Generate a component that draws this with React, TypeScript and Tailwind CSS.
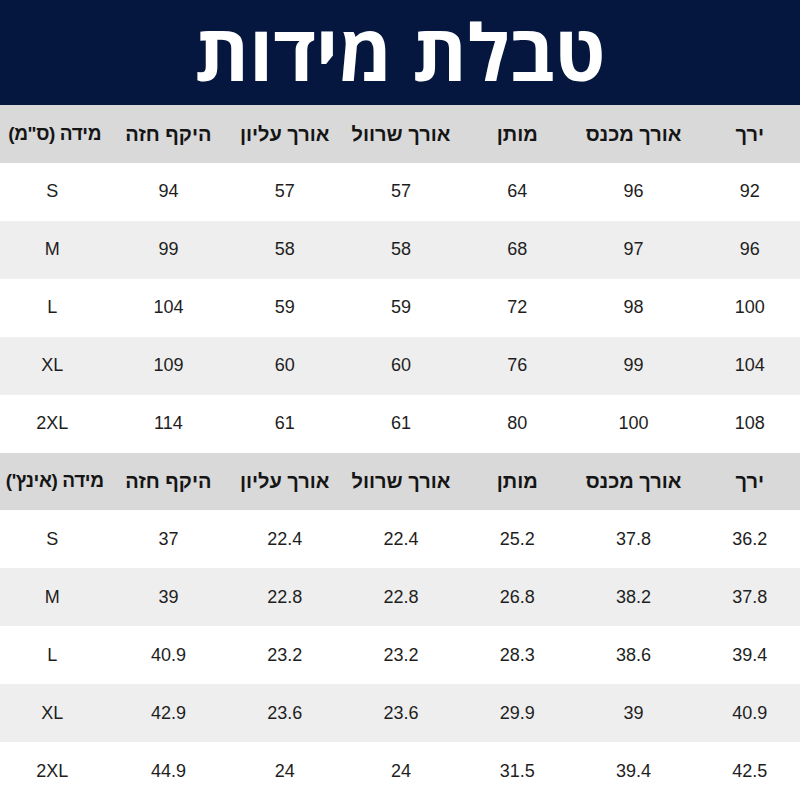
const rowsCm = [
  ["S", "94", "57", "57", "64", "96", "92"],
  ["M", "99", "58", "58", "68", "97", "96"],
  ["L", "104", "59", "59", "72", "98", "100"],
  ["XL", "109", "60", "60", "76", "99", "104"],
  ["2XL", "114", "61", "61", "80", "100", "108"],
];

const rowsIn = [
  ["S", "37", "22.4", "22.4", "25.2", "37.8", "36.2"],
  ["M", "39", "22.8", "22.8", "26.8", "38.2", "37.8"],
  ["L", "40.9", "23.2", "23.2", "28.3", "38.6", "39.4"],
  ["XL", "42.9", "23.6", "23.6", "29.9", "39", "40.9"],
  ["2XL", "44.9", "24", "24", "31.5", "39.4", "42.5"],
];

const heads = ["היקף חזה", "אורך עליון", "אורך שרוול", "מותן", "אורך מכנס", "ירך"];

function HeadRow({ first }: { first: string }) {
  return (
    <div className="bg-[#d9d9d9] overflow-hidden">
      <div className="grid grid-cols-7 w-[814px] -ml-[6px] h-full items-center">
        <div dir="rtl" className="text-center text-[19px] tracking-[-0.4px] font-bold text-[#151515] whitespace-nowrap pl-[5px]">
          {first}
        </div>
        {heads.map((h, i) => (
          <div key={i} dir="rtl" className="text-center text-[20px] font-bold text-[#151515] whitespace-nowrap">
            {h}
          </div>
        ))}
      </div>
    </div>
  );
}

function DataRow({ cells, shaded }: { cells: string[]; shaded: boolean }) {
  return (
    <div className={shaded ? "bg-[#eeeeee] overflow-hidden" : "bg-white overflow-hidden"}>
      <div className="grid grid-cols-7 w-[814px] -ml-[6px] h-full items-center">
        {cells.map((c, i) => (
          <div key={i} className="text-center text-[18px] text-[#1e1e1e]">
            {c}
          </div>
        ))}
      </div>
    </div>
  );
}

export default function App() {
  return (
    <div
      className="w-[800px] h-[800px] flex flex-col overflow-hidden bg-white"
      style={{ fontFamily: '"Liberation Sans", Arial, sans-serif' }}
    >
      <div className="h-[105px] bg-[#05163f] flex items-center justify-center shrink-0">
        <h1
          dir="rtl"
          className="text-white text-[78px] font-bold leading-[1.2] -mt-[2px]"
          style={{ fontFamily: '"Open Sans", "Liberation Sans", sans-serif' }}
        >
          טבלת מידות
        </h1>
      </div>
      <div className="flex-1 grid grid-rows-12">
        <HeadRow first={'מידה (ס"מ)'} />
        {rowsCm.map((r, i) => (
          <DataRow key={"cm" + i} cells={r} shaded={i % 2 === 1} />
        ))}
        <HeadRow first={"מידה (אינץ')"} />
        {rowsIn.map((r, i) => (
          <DataRow key={"in" + i} cells={r} shaded={i % 2 === 1} />
        ))}
      </div>
    </div>
  );
}
